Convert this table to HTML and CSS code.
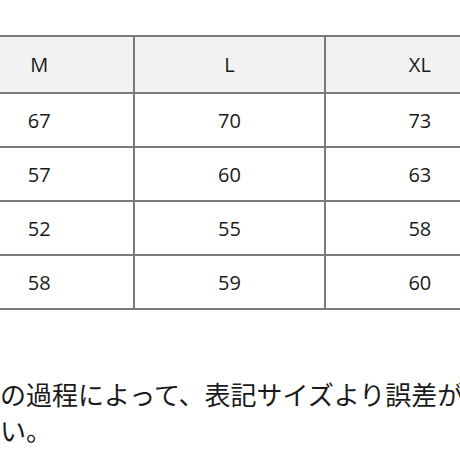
FILE: index.html
```html
<!DOCTYPE html>
<html lang="ja">
<head>
<meta charset="utf-8">
<link rel="stylesheet" href="styles.css">
</head>
<body>
<div class="page">
  <table class="size-table">
    <thead>
      <tr><th>M</th><th>L</th><th>XL</th></tr>
    </thead>
    <tbody>
      <tr><td>67</td><td>70</td><td>73</td></tr>
      <tr><td>57</td><td>60</td><td>63</td></tr>
      <tr><td>52</td><td>55</td><td>58</td></tr>
      <tr><td>58</td><td>59</td><td>60</td></tr>
    </tbody>
  </table>
  <p class="note"><span class="line">の過程によって、表記サイズより誤差が</span><span class="line">い。</span></p>
</div>
</body>
</html>
```
FILE: styles.css
```css
html, body {
  margin: 0;
  padding: 0;
  background: #ffffff;
}
.page {
  width: 460px;
  height: 460px;
  overflow: hidden;
  padding-top: 35px;
  box-sizing: border-box;
  color: #1a1a1a;
}
.size-table {
  border-collapse: collapse;
  table-layout: fixed;
  width: 573px;
  margin-left: -57px;
  font-family: "Open Sans", "Noto Sans CJK JP", sans-serif;
  font-size: 20px;
}
.size-table th,
.size-table td {
  border: 2px solid #7a7a7a;
  text-align: center;
  padding: 0;
  font-weight: normal;
}
.size-table th {
  background: #f2f2f2;
  height: 55px;
}
.size-table td {
  height: 52px;
}
.note {
  margin: 66px 0 0 0;
  font-family: "Noto Sans CJK JP", sans-serif;
  font-size: 26px;
  line-height: 36px;
  white-space: nowrap;
}
.line {
  display: block;
}
```
